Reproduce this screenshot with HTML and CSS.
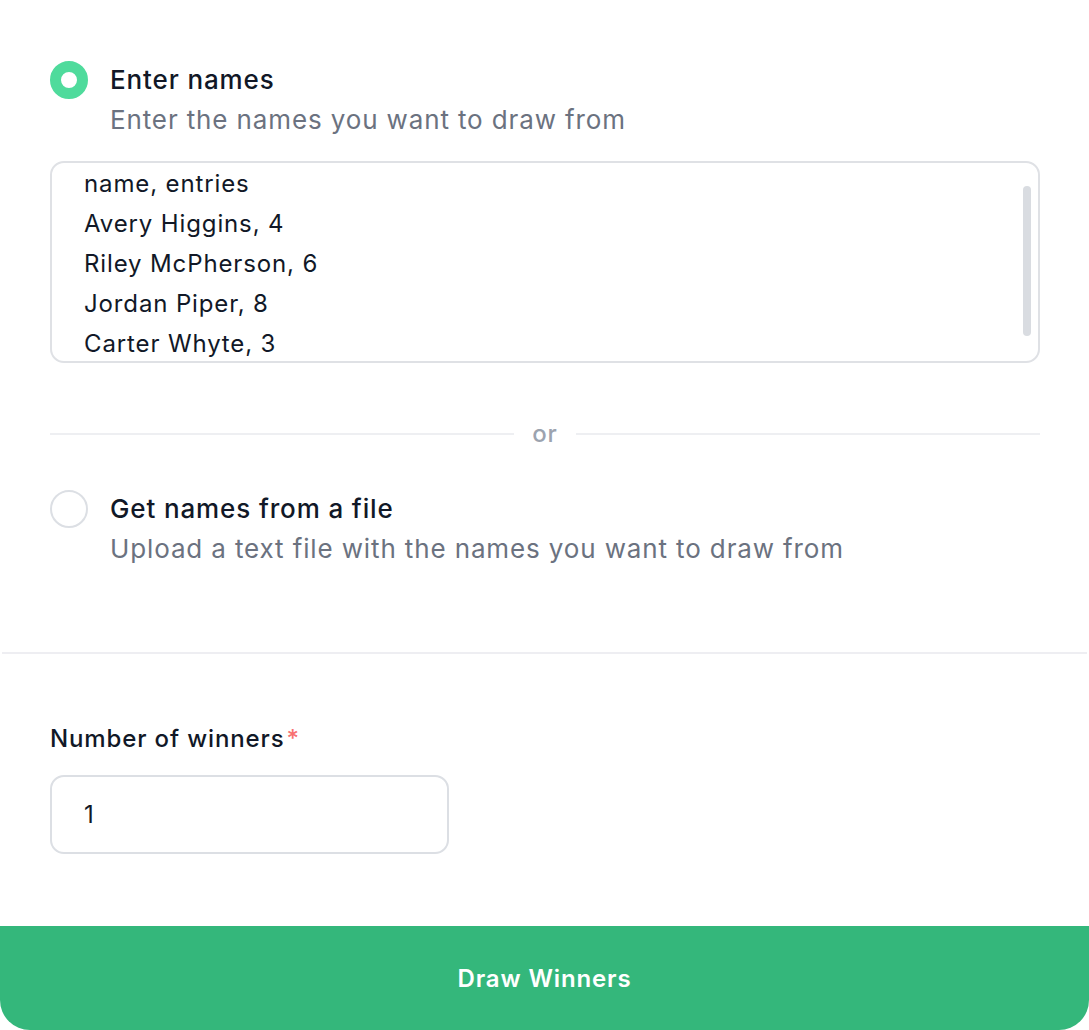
FILE: index.html
```html
<!DOCTYPE html>
<html lang="en">
<head>
    <meta charset="UTF-8">
    <meta name="viewport" content="width=device-width, initial-scale=1.0">
    <title>Draw Winners</title>
    <link rel="stylesheet" href="styles.css">
</head>
<body>

    <form class="draw-form">
        <div class="source-section">
            <!-- 手動輸入 -->
            <label class="option">
                <input type="radio" name="source" value="text" checked>
                <span class="option-text">
                    <span class="option-title">Enter names</span>
                    <span class="option-desc">Enter the names you want to draw from</span>
                </span>
            </label>
            <div class="names-box">
                <textarea class="names-input" spellcheck="false">name, entries
Avery Higgins, 4
Riley McPherson, 6
Jordan Piper, 8
Carter Whyte, 3</textarea>
                <span class="scroll-thumb"></span>
            </div>

            <div class="or-divider"><span>or</span></div>

            <!-- 上載檔案 -->
            <label class="option">
                <input type="radio" name="source" value="file">
                <span class="option-text">
                    <span class="option-title">Get names from a file</span>
                    <span class="option-desc">Upload a text file with the names you want to draw from</span>
                </span>
            </label>
        </div>

        <hr class="section-line">

        <div class="winners-section">
            <label class="field-label" for="winners">Number of winners<span class="required">*</span></label>
            <input type="text" id="winners" class="winners-input" value="1">
        </div>

        <button type="button" class="draw-button">Draw Winners</button>
    </form>

</body>
</html>
```

FILE: styles.css
```css
body {
    margin: 0;
    font-family: 'Inter', 'Noto Sans', sans-serif;
    letter-spacing: 0.87px;
    background-color: #ffffff;
    color: #111827;
}
.draw-form {
    display: flex;
    flex-direction: column;
}
.source-section {
    padding: 60px 49px 83px 50px;
    display: flex;
    flex-direction: column;
}
.option {
    display: flex;
    align-items: flex-start;
    gap: 22px;
    cursor: pointer;
}
.option input[type="radio"] {
    appearance: none;
    margin: 1px 0 0 0;
    width: 38px;
    height: 38px;
    border-radius: 50%;
    border: 2px solid #dcdfe4;
    background-color: #ffffff;
    flex-shrink: 0;
    box-sizing: border-box;
}
.option input[type="radio"]:checked {
    border: 11px solid #4fdb9c; /* 已選 */
}
.option-text {
    display: flex;
    flex-direction: column;
}
.option-title {
    font-size: 26px;
    font-weight: 500;
    line-height: 40px;
    color: #111827;
}
.option-desc {
    font-size: 26px;
    line-height: 40px;
    color: #6b7280;
}
.names-box {
    position: relative;
    margin-top: 21px;
    display: flex;
}
.names-input {
    flex: 1;
    height: 202px;
    box-sizing: border-box;
    border: 2px solid #dfe1e5;
    border-radius: 14px;
    padding: 1px 30px 1px 32px;
    font-family: inherit;
    font-size: 24px;
    letter-spacing: inherit;
    line-height: 40px;
    color: #111827;
    resize: none;
    outline: none;
    overflow: hidden;
}
.scroll-thumb {
    position: absolute;
    top: 25px;
    right: 9px;
    width: 8px;
    height: 150px;
    border-radius: 4px;
    background-color: #d9dce1;
}
.or-divider {
    margin: 51px 0 35px 0;
    display: flex;
    align-items: center;
    gap: 18px;
    color: #9ca3af;
    font-size: 24px;
    font-weight: 500;
    line-height: 40px;
}
.or-divider::before,
.or-divider::after {
    content: "";
    flex: 1;
    height: 2px;
    background-color: #eeeff2;
}
.section-line {
    margin: 0 2px;
    border: none;
    height: 2px;
    background-color: #eeeef2;
}
.winners-section {
    padding: 65px 50px 72px 50px;
    display: flex;
    flex-direction: column;
    align-items: flex-start;
}
.field-label {
    font-size: 24px;
    font-weight: 500;
    line-height: 40px;
    color: #111827;
}
.required {
    color: #f87171;
    margin-left: 2px;
}
.winners-input {
    margin-top: 16px;
    width: 399px;
    height: 79px;
    box-sizing: border-box;
    border: 2px solid #dcdfe4;
    border-radius: 14px;
    padding: 0 32px;
    font-family: inherit;
    font-size: 24px;
    letter-spacing: inherit;
    color: #111827;
    outline: none;
}
.draw-button {
    height: 104px;
    width: 100%;
    border: none;
    border-radius: 0 0 30px 30px;
    background-color: #34b77b;
    color: #ffffff;
    font-family: inherit;
    font-size: 24px;
    font-weight: 600;
    letter-spacing: inherit;
    cursor: pointer;
}
.draw-button:hover {
    background-color: #2ea56e; /* 懸停 */
}
```
